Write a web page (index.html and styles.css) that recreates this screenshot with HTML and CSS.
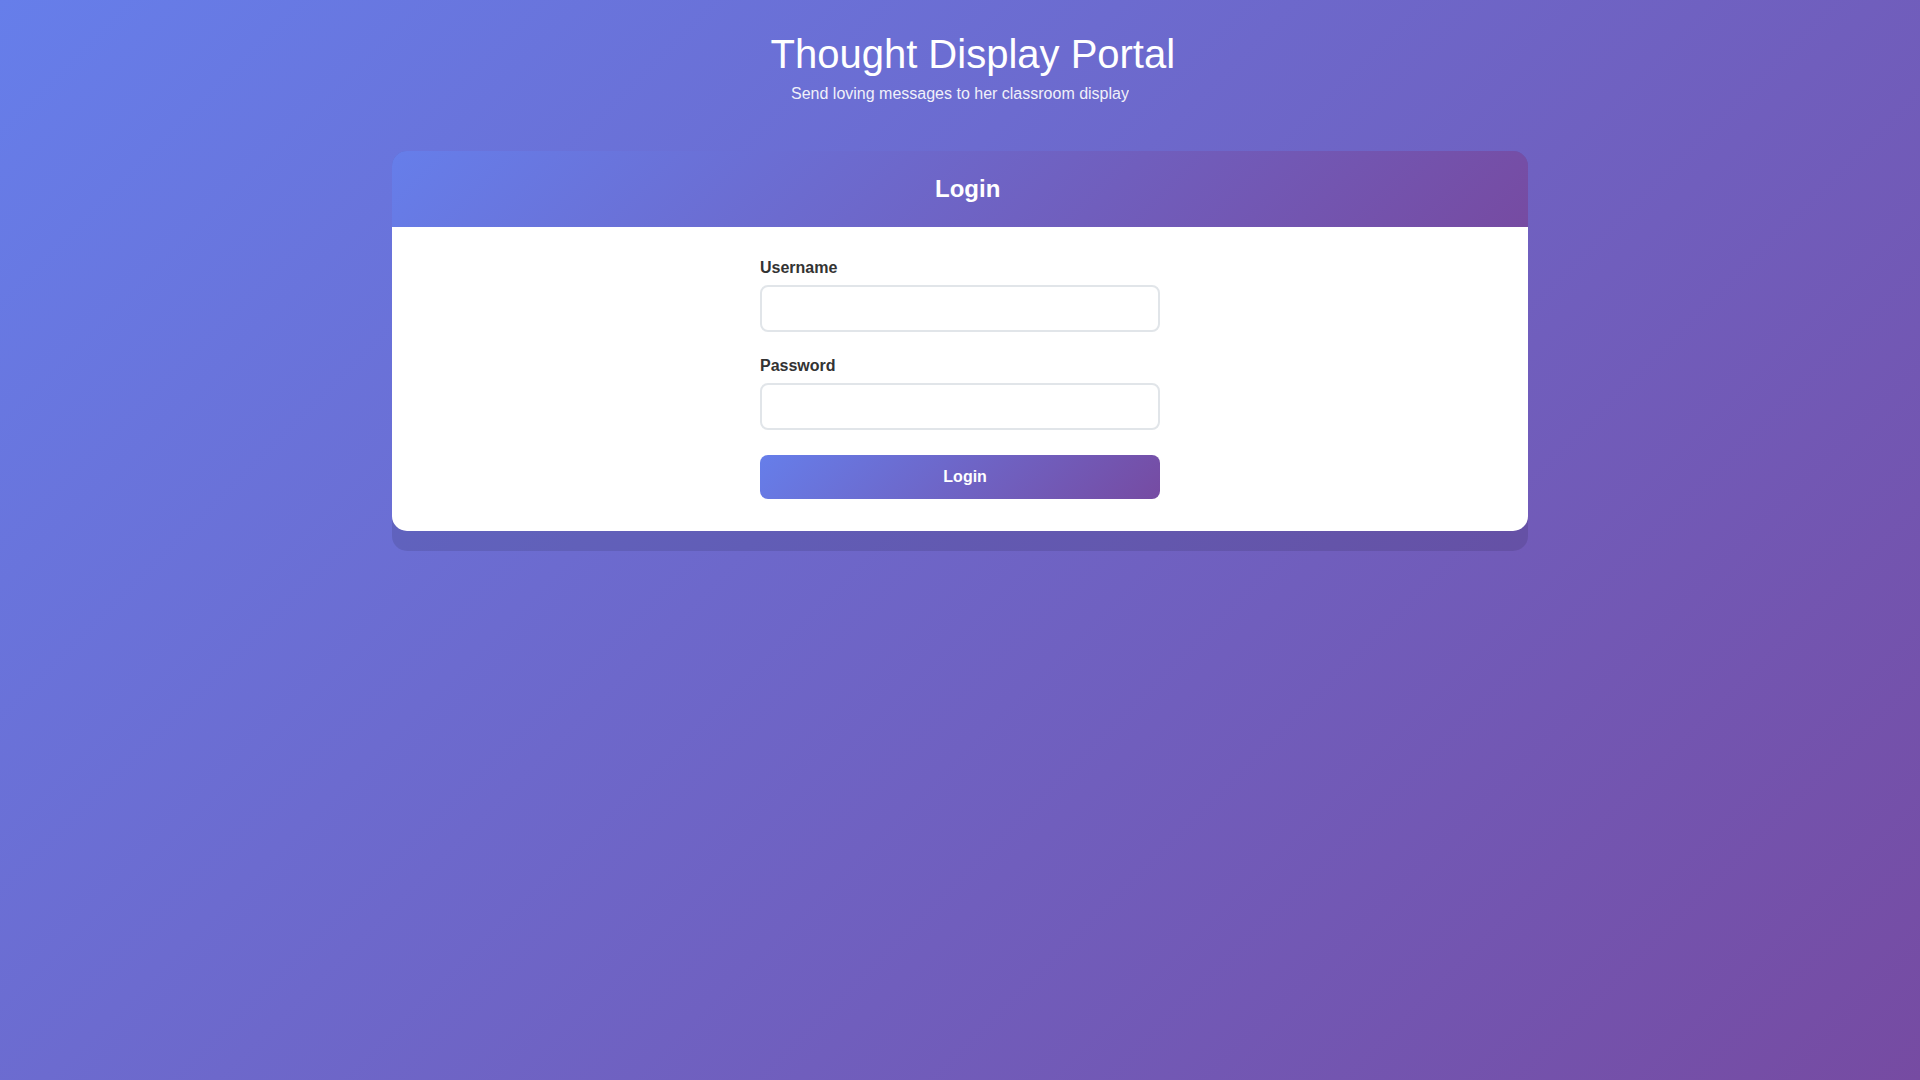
FILE: index.html
```html
<!DOCTYPE html>
<html lang="en">
<head>
<meta charset="utf-8">
<title>Thought Display Portal</title>
<link rel="stylesheet" href="styles.css">
</head>
<body>
<div class="container">
  <header class="page-header">
    <h1 class="title"><span class="ghost"></span>Thought Display Portal</h1>
    <p class="subtitle">Send loving messages to her classroom display</p>
  </header>
  <section class="card">
    <div class="card-header">
      <h2 class="card-title"><span class="ghost"></span>Login</h2>
    </div>
    <div class="card-body">
      <form class="login-form" onsubmit="return false;">
        <div class="form-group">
          <label class="form-label" for="username">Username</label>
          <input class="form-input" type="text" id="username">
        </div>
        <div class="form-group">
          <label class="form-label" for="password">Password</label>
          <input class="form-input" type="password" id="password">
        </div>
        <button class="btn" type="submit"><span class="ghost"></span>Login</button>
      </form>
    </div>
  </section>
</div>
</body>
</html>
```

FILE: styles.css
```css
* {
  box-sizing: border-box;
}

html, body {
  margin: 0;
  padding: 0;
}

body {
  min-height: 100vh;
  font-family: "Liberation Sans", Arial, sans-serif;
  background: linear-gradient(135deg, #667eea 0%, #764ba2 100%);
  color: #333;
}

.container {
  max-width: 1200px;
  margin: 0 auto;
  padding: 32px;
}

.page-header {
  text-align: center;
  color: #fff;
  margin-bottom: 48px;
}

.title {
  margin: 0 0 8px;
  font-size: 40px;
  font-weight: 400;
}

.subtitle {
  margin: 0;
  font-size: 16px;
  opacity: 0.9;
}

.ghost {
  display: inline-block;
  width: 0.64em;
}

.card {
  background: rgba(0, 0, 0, 0.1);
  border-radius: 15px;
  overflow: hidden;
  padding-bottom: 20px;
}

.card-header {
  background: linear-gradient(135deg, #667eea 0%, #764ba2 100%);
  padding: 24px;
  text-align: center;
}

.card-title {
  margin: 0;
  color: #fff;
  font-size: 24px;
  font-weight: 700;
}

.card-body {
  background: #fff;
  border-radius: 0 0 15px 15px;
  padding: 32px;
}

.login-form {
  max-width: 400px;
  margin: 0 auto;
}

.form-group {
  margin-bottom: 25px;
}

.form-label {
  display: block;
  margin-bottom: 8px;
  font-size: 16px;
  font-weight: 700;
  color: #333;
}

.form-input {
  display: block;
  width: 100%;
  height: 47px;
  padding: 12px;
  border: 2px solid #e1e5e9;
  border-radius: 8px;
  font-family: inherit;
  font-size: 16px;
  background: #fff;
  outline: none;
}

.btn {
  display: block;
  width: 100%;
  padding: 12px;
  border: none;
  border-radius: 8px;
  background: linear-gradient(135deg, #667eea 0%, #764ba2 100%);
  color: #fff;
  font-family: inherit;
  font-size: 16px;
  font-weight: 700;
  line-height: 20px;
  cursor: pointer;
}
```
